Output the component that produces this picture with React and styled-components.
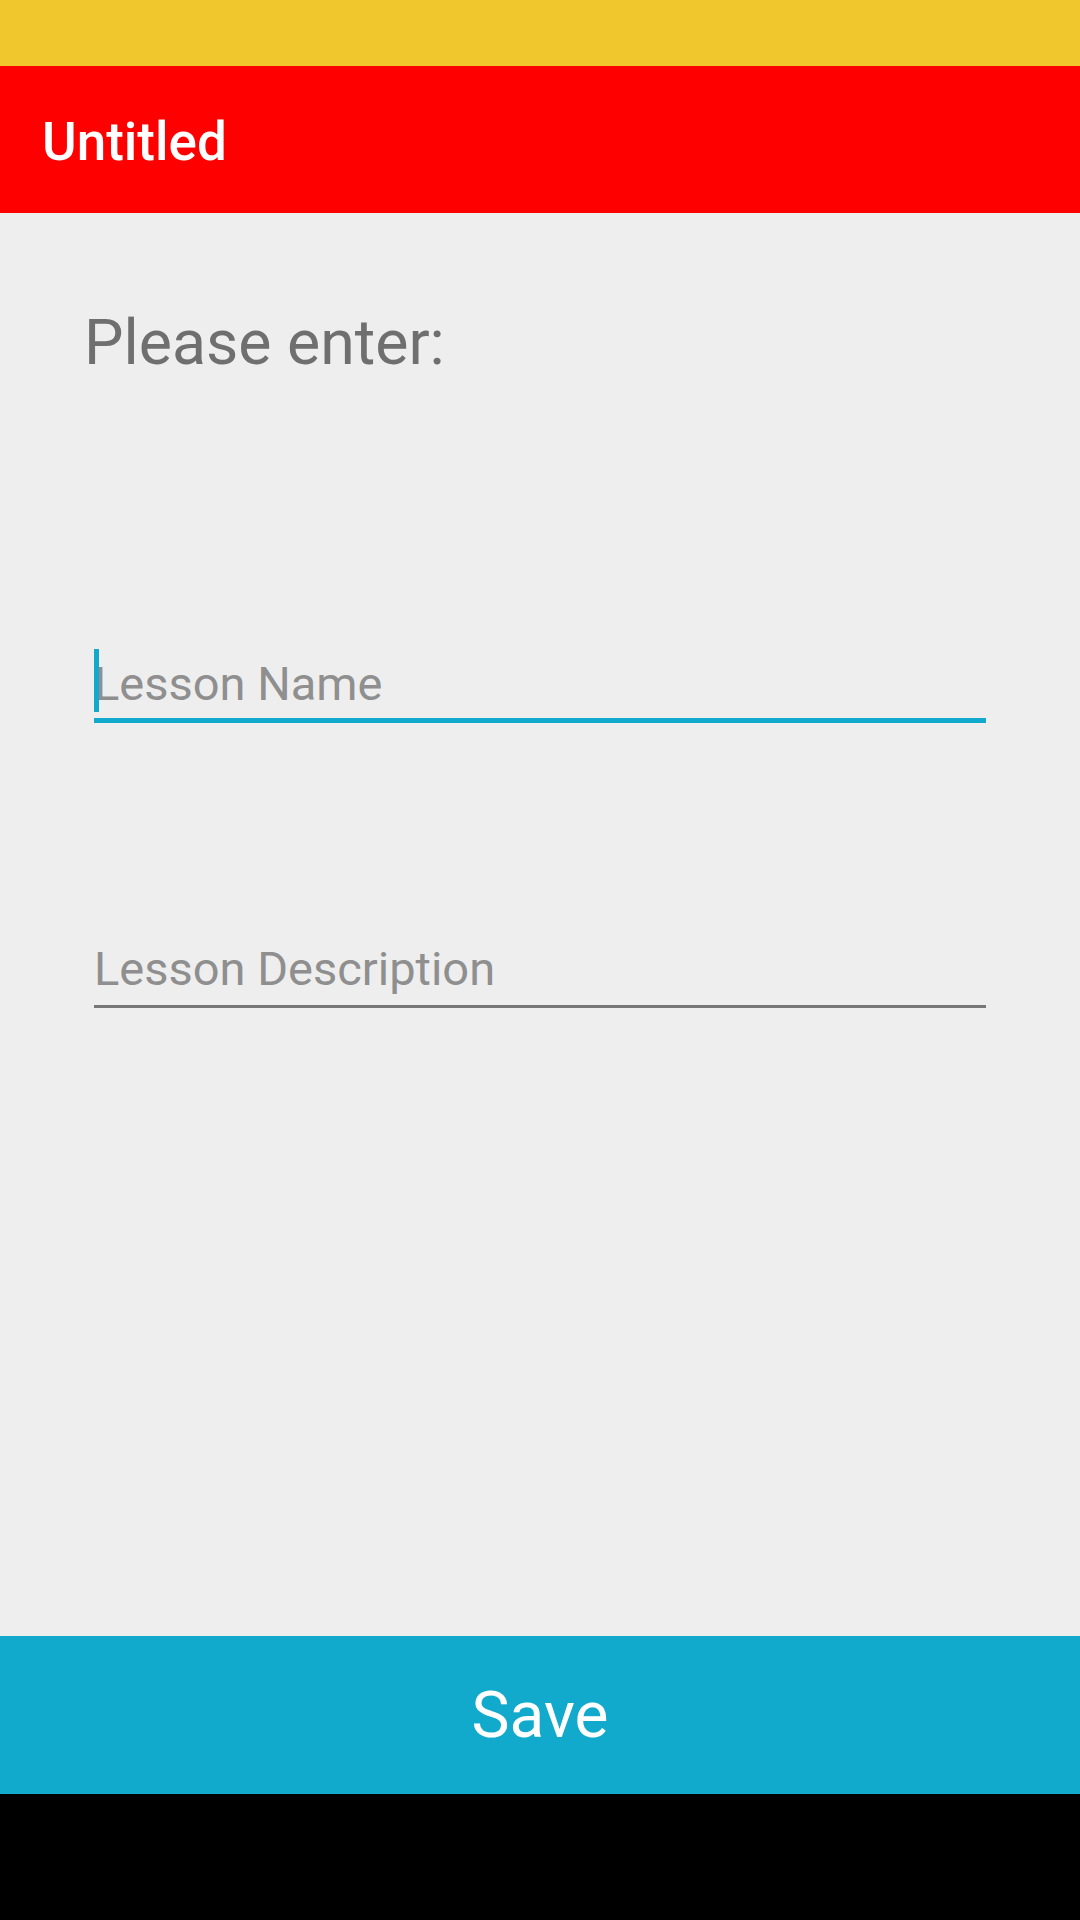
import React from "react";
import styled, { createGlobalStyle } from "styled-components";

const GlobalStyle = createGlobalStyle`
  html, body {
    margin: 0;
    padding: 0;
    background: #eeeeee;
  }
  * { box-sizing: border-box; }
  body {
    font-family: Roboto, "Noto Sans", "Liberation Sans", sans-serif;
  }
`;

const Screen = styled.div`
  width: 1080px;
  height: 1920px;
  display: flex;
  flex-direction: column;
  background: #eeeeee;
  overflow: hidden;
`;

const StatusBar = styled.div`
  height: 66px;
  flex-shrink: 0;
  background: #f0c82e;
`;

const Toolbar = styled.header`
  height: 147px;
  flex-shrink: 0;
  background: #ff0000;
  display: flex;
  align-items: center;
  padding-left: 42px;
  padding-top: 5px;
`;

const Title = styled.h1`
  margin: 0;
  color: #ffffff;
  font-size: 53px;
  font-weight: 500;
  line-height: 1;
`;

const Content = styled.main`
  flex: 1;
  display: flex;
  flex-direction: column;
  padding: 98px 94px 0 94px;
`;

const Heading = styled.div`
  margin-left: -10px;
  color: #6f6f6f;
  font-size: 62.6px;
  line-height: 63px;
`;

const Field = styled.div`
  position: relative;
  margin-top: ${(p) => p.$gap}px;
  padding-bottom: ${(p) => (p.$focused ? 10 : 12)}px;
  border-bottom: ${(p) => (p.$focused ? "5px solid #12aacc" : "3px solid #777777")};
  font-size: 47px;
  line-height: 48px;
  color: #8f8f8f;
`;

const Caret = styled.span`
  position: absolute;
  left: 0;
  top: -11px;
  width: 5px;
  height: 63px;
  background: #12aacc;
`;

const SaveButton = styled.button`
  height: 158px;
  flex-shrink: 0;
  width: 100%;
  border: none;
  margin: 0;
  padding: 0;
  background: #12aacc;
  color: #ffffff;
  font-family: Roboto, "Noto Sans", "Liberation Sans", sans-serif;
  font-size: 64px;
  display: flex;
  align-items: center;
  justify-content: center;
`;

const NavBar = styled.div`
  height: 126px;
  flex-shrink: 0;
  background: #000000;
`;

export default function App() {
  return (
    <>
      <GlobalStyle />
      <Screen>
        <StatusBar />
        <Toolbar>
          <Title>Untitled</Title>
        </Toolbar>
        <Content>
          <Heading>Please enter:</Heading>
          <Field $focused $gap={286}>
            <Caret />
            Lesson Name
          </Field>
          <Field $gap={222}>Lesson Description</Field>
        </Content>
        <SaveButton>Save</SaveButton>
        <NavBar />
      </Screen>
    </>
  );
}
